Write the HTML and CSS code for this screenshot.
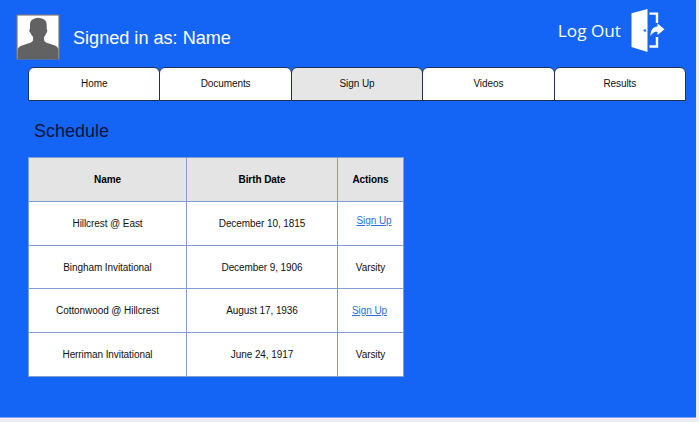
FILE: index.html
```html
<!DOCTYPE html>
<html lang="en">
<head>
<meta charset="utf-8">
<title>Schedule</title>
<link rel="stylesheet" href="styles.css">
</head>
<body>
<div class="page">
  <header class="header">
    <svg class="avatar" viewBox="0 0 44 46" aria-hidden="true">
      <rect x="1" y="1" width="42" height="44" fill="#fff" stroke="#7b777c" stroke-width="1.2"/>
      <path fill="#626262" d="M1.500 45V36Q2 32.500 6 31.500L15 28.500Q17.500 27 17.300 24L16.800 22.500Q15.300 21 14.600 19Q13 18 13.300 15.500L14 15V10.500Q14 6.500 17 5.300Q19.500 3.700 22.500 3.800Q30.500 4.500 30.700 10.500V15Q31.800 16 31 18.300L30 19.500Q29.500 21.500 28 23V25.500Q28 27.500 30 28.500L39 31.500Q42 32.500 42.500 36V45Z"/>
    </svg>
    <div class="user">Signed in as: Name</div>
    <a class="logout">
      <span>Log Out</span>
      <svg class="door" viewBox="0 0 34 44" aria-hidden="true">
        <path fill="#fff" d="M0.500 4.200L16.500 0V43L0.500 38Z"/>
        <circle cx="13.800" cy="21.500" r="1.200" fill="#1465f6"/>
        <path fill="none" stroke="#fff" stroke-width="2.400" d="M18.500 4.600H26V14M26 28V37.500H18.500"/>
        <path fill="#fff" d="M19.500 27.200C19.500 21 22 17.800 26.500 17.500V14.500L33.500 20.200L26.500 26V22.900C23 22.600 21 24.500 19.500 27.200Z"/>
      </svg>
    </a>
  </header>
  <nav class="tabs">
    <a class="tab">Home</a>
    <a class="tab">Documents</a>
    <a class="tab active">Sign Up</a>
    <a class="tab">Videos</a>
    <a class="tab">Results</a>
  </nav>
  <h1 class="title">Schedule</h1>
  <table class="schedule">
    <colgroup><col class="c-name"><col class="c-date"><col class="c-action"></colgroup>
    <thead><tr><th>Name</th><th>Birth Date</th><th>Actions</th></tr></thead>
    <tbody>
      <tr><td>Hillcrest @ East</td><td>December 10, 1815</td><td class="raised"><a class="link">Sign Up</a></td></tr>
      <tr class="short"><td>Bingham Invitational</td><td>December 9, 1906</td><td>Varsity</td></tr>
      <tr><td>Cottonwood @ Hillcrest</td><td>August 17, 1936</td><td class="nudged"><a class="link">Sign Up</a></td></tr>
      <tr><td>Herriman Invitational</td><td>June 24, 1917</td><td>Varsity</td></tr>
    </tbody>
  </table>
</div>
</body>
</html>
```
FILE: styles.css
```css
* { box-sizing: border-box; }
body {
  margin: 0;
  background: #efedf2;
  font-family: "Liberation Sans", Arial, sans-serif;
  font-size: 10px;
  letter-spacing: -0.08px;
  color: #111;
}
.page {
  width: 696px;
  height: 418px;
  padding-left: 28px;
  background: #1465f6;
  border-bottom: 1px solid #7ca6ee;
  overflow: hidden;
}
.header {
  display: flex;
  height: 67px;
  margin-left: -12px;
  color: #fff;
  letter-spacing: 0;
}
.avatar { width: 44px; height: 46px; margin-top: 14px; }
.user {
  margin: 27px 0 0 13px;
  font-size: 18.1px;
  line-height: 22px;
  white-space: nowrap;
}
.logout {
  display: flex;
  margin: 9px 31px 0 auto;
  font: 17.2px/43px "Open Sans", sans-serif;
  white-space: nowrap;
}
.door { width: 34px; height: 44px; margin-left: 10px; }
.tabs { display: flex; width: 658px; height: 34px; }
.tab {
  flex: 1;
  display: flex;
  align-items: center;
  justify-content: center;
  margin-right: -1px;
  padding-bottom: 1px;
  background: #fff;
  border: 1px solid #1d3157;
  border-radius: 6px 6px 0 0;
}
.tab:last-child { margin-right: 0; }
.active { background: #e6e6e6; }
.title {
  margin: 20px 0 16px 6px;
  font-size: 18px;
  font-weight: 400;
  line-height: 20px;
  letter-spacing: 0;
  color: #071638;
}
.schedule {
  width: 376px;
  border-collapse: collapse;
  table-layout: fixed;
  background: #fff;
}
.schedule tr { height: 44px; }
.schedule .short { height: 43px; }
.c-name { width: 158px; }
.c-date { width: 151px; }
.c-action { width: 66px; }
th, td {
  padding: 0;
  border: 1px solid #839dcc;
  text-align: center;
  vertical-align: middle;
}
th { background: #e4e4e4; color: #000; }
.raised { padding: 0 0 6px 7px; }
.nudged { padding: 0 2px 1px 0; }
.link { color: #2b6fe0; text-decoration: underline; }
```
